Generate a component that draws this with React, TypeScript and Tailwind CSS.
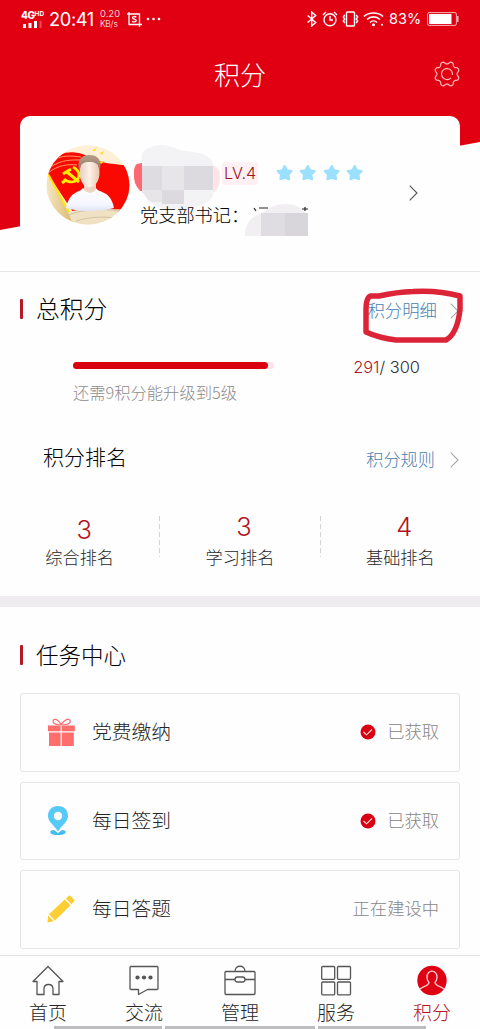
import type { ReactNode } from "react";

function StatusBar() {
  return (
    <div className="flex h-[38px] items-center justify-between pl-[21px] pr-[21px] font-['Inter',sans-serif] text-white">
      <div className="flex items-center">
        <div className="flex w-6 flex-col">
          <div className="flex h-[9px] items-start whitespace-nowrap">
            <span className="text-[10px] leading-[9px] font-extrabold tracking-[-0.4px]">4G</span>
            <span className="text-[6.5px] leading-[6px] font-bold">HD</span>
          </div>
          <svg className="ml-[2px] mt-[1px] h-[7px] w-[19px]" viewBox="0 0 19 7" fill="white">
            <path d="M0 3h3v4H0zM5.500 2h3v5h-3zM11 0h3v7h-3z" />
            <path d="M16.500 -2h2v9h-2z" opacity=".3" />
          </svg>
        </div>
        <span className="ml-[4px] w-[49px] whitespace-nowrap text-[18.300px] leading-6 tracking-[-0.4px]">20:41</span>
        <div className="mb-px ml-[2px] flex w-[24px] flex-col whitespace-nowrap font-light">
          <span className="text-[9.500px] leading-[10px]">0.20</span>
          <span className="text-[8.500px] leading-[10px] tracking-[-0.2px]">KB/s</span>
        </div>
        <svg className="ml-[3px] h-[15px] w-[15px]" viewBox="0 0 15 15" fill="none" stroke="white" strokeWidth="1.300">
          <path d="M0 2h12.500v13M2 0v12.500h13" />
          <path d="M9.300 5.200C8 4.200 5.500 4.200 5.500 5.800S9.300 7 9.300 8.600 6.200 10.200 5.200 9.200" strokeWidth="1.300" />
        </svg>
        <svg className="ml-[4px] h-[4px] w-[16px]" viewBox="0 0 16 4" fill="white">
          <circle cx="2" cy="2" r="1.300" /><circle cx="7.500" cy="2" r="1.300" /><circle cx="13" cy="2" r="1.300" />
        </svg>
      </div>
      <div className="flex items-center">
        <svg className="h-4 w-[10px]" viewBox="0 0 10 16" fill="none" stroke="white" strokeWidth="1.400">
          <path d="m.7 4.500 8 7-4 3.500V1l4 3.500-8 7" />
        </svg>
        <svg className="ml-[5px] h-4 w-4" viewBox="0 0 16 16" fill="none" stroke="white" strokeWidth="1.400">
          <circle cx="8" cy="8.700" r="6" /><path d="M8 5v4h3M1 4l3-3M15 4l-3-3" />
        </svg>
        <svg className="ml-[4px] h-4 w-[17px]" viewBox="0 0 17 16" fill="none" stroke="white" strokeWidth="1.400">
          <rect x="4.500" y="1" width="8" height="14" rx="1" /><path d="m2.800 4-1.500 2 1.500 2-1.500 2 1.500 2M14.200 4l1.500 2-1.500 2 1.500 2-1.500 2" />
        </svg>
        <svg className="ml-[4px] h-4 w-[21px]" viewBox="0 0 21 16" fill="none" stroke="white" strokeWidth="1.600">
          <path d="M1 5.500C6 .8 15 .8 20 5.500M4 8.500c3.500-3.500 9.500-3.500 13 0M7 11.500c2-2 5-2 7 0" /><circle cx="10.500" cy="13.700" r="1.500" fill="white" stroke="none" /><circle cx="19" cy="13.700" r="1" fill="white" stroke="none" />
        </svg>
        <span className="ml-[5px] w-[33px] whitespace-nowrap text-[14.500px] leading-5">83%</span>
        <svg className="ml-[5px] h-[14px] w-[32px]" viewBox="0 0 32 14">
          <rect x=".6" y=".6" width="28.800" height="12.800" rx="1.500" fill="none" stroke="white" strokeOpacity=".7" />
          <path d="M2 2h22.500v10H2z" fill="white" />
          <path d="M30.800 4v6" stroke="white" strokeOpacity=".7" strokeWidth="1.500" />
        </svg>
      </div>
    </div>
  );
}

const gearPath = Array.from({ length: 96 }, (_, i) => {
  const angle = (i / 96) * Math.PI * 2;
  const wave = Math.cos(8 * angle);
  const radius = 11.3 - 1.25 * Math.sign(wave) * Math.pow(Math.abs(wave), 0.65);
  return `${i ? "L" : "M"}${(13 + radius * Math.cos(angle)).toFixed(2)} ${(13 + radius * Math.sin(angle)).toFixed(2)}`;
}).join("") + "Z";

function Gear() {
  return (
    <svg className="h-[26px] w-[26px]" viewBox="0 0 26 26" fill="none" stroke="#ffbcbc" strokeWidth="1.200" strokeLinejoin="round">
      <path d={gearPath} />
      <path d="M17 16.800A5.500 5.500 0 1 1 18.400 14" />
    </svg>
  );
}

function Avatar() {
  return (
    <svg className="-mt-px h-[82px] w-[84px] shrink-0" viewBox="0 0 84 82">
      <defs>
        <clipPath id="round"><ellipse cx="42" cy="40" rx="41.500" ry="39.500" /></clipPath>
        <linearGradient id="skin" x1="0" y1="0" x2="1" y2="0"><stop stopColor="#e5cebf" /><stop offset=".5" stopColor="#fff1e6" /><stop offset="1" stopColor="#e5c8b2" /></linearGradient>
        <linearGradient id="shirt" x1="0" y1="0" x2="0" y2="1"><stop stopColor="#ffffff" /><stop offset=".7" stopColor="#f5f6ff" /><stop offset="1" stopColor="#dfe4f5" /></linearGradient>
        <linearGradient id="hair" x1="0" y1="0" x2="0" y2="1"><stop stopColor="#b5a08c" /><stop offset="1" stopColor="#927460" /></linearGradient>
        <linearGradient id="pole" x1="0" y1="0" x2="1" y2="0"><stop stopColor="#f5e7c5" /><stop offset="1" stopColor="#d9b568" /></linearGradient>
      </defs>
      <g clipPath="url(#round)">
        <path d="M0 0h84v82H0z" fill="#fbf0d4" />
        <path d="M2 18C14 5 31 5 43 12s28 7 41 9v46H27L2 29z" fill="#fa0902" />
        <path d="M20 0h64v19C63 19 46 8 20 6z" fill="#fdf0d7" />
        <path d="M4 17C16 9 26 11 35 12M3 23c13-9 23-8 31-8M2 28c10-8 20-9 29-8" stroke="#ff9c60" fill="none" strokeWidth="1" />
        <path d="m1 29 28 50H0z" fill="url(#pole)" />
        <path d="m2 29 27 49" stroke="#ffe800" strokeWidth="2" />
        <path d="M22 67c14-4 40-3 62-2v17H28z" fill="#efe1c1" />
        <path d="M22 70c18-7 42-7 58-2M30 76c16-5 32-5 48-1" stroke="#d2c3a8" fill="none" />
        <g fill="none" stroke="#ffed00">
          <path d="M27 22c8 4 8 14-1 15-4 0-6-1-8-3" strokeWidth="2.600" />
          <path d="m17 29 8-5M21 27l12 10M16 38l4-3" strokeWidth="3" />
        </g>
        <path d="m46 6 5-4-2 4zM54 8l4-2-2 4zM53 17l6-1-4 3z" fill="#ffe016" />
        <path d="M37 43c5 5 9 5 13 0 2 5 15 2 18 20-13 4-36 4-48 0 4-18 14-15 17-20z" fill="url(#shirt)" />
        <path d="M38 35h12v9c-2 5-10 5-12 0z" fill="#ecd3c2" />
        <ellipse cx="43.500" cy="27.500" rx="10" ry="15" fill="url(#skin)" />
        <path d="M33.500 26c-3-10 1-16 10-16s13 6 10 16l-1.500-6c-3-2.500-5-3-8.500-3s-6 .5-8.500 3z" fill="url(#hair)" />
      </g>
    </svg>
  );
}

function Chevron({ className }: { className: string }) {
  return <svg className={className} viewBox="0 0 9 16" fill="none" stroke="currentColor" strokeWidth="1.100"><path d="m.7.700 7.300 7.300-7.300 7.300" /></svg>;
}

function Header() {
  return (
    <header className="relative h-[272px] shrink-0 border-b border-[#e6e6e6]">
      <div className="absolute inset-x-0 top-0 h-[230px] bg-[#e10012] [clip-path:polygon(0_0,100%_0,100%_142px,0_230px)]" />
      <div className="relative">
        <StatusBar />
        <div className="flex h-[78px] items-center justify-between px-5 text-white">
          <span className="w-[26px]" />
          <h1 className="-mt-[7px] text-[26px] leading-8 font-light">积分</h1>
          <div className="-mt-[7px]"><Gear /></div>
        </div>
        <div className="mx-5 flex h-[150px] items-start rounded-t-[10px] bg-[#fefefe] pl-[26px] pt-[30px]">
          <Avatar />
          <div className="ml-[4px] w-[240px] shrink-0">
            <div className="flex h-[54px] items-start">
              <svg className="h-[66px] w-[87px] shrink-0 overflow-visible" viewBox="0 0 87 66">
                <defs><clipPath id="nameMask"><path d="M0 24Q1 19 3 18L8 17V8Q10 3 20 0 28-2 34 0L46 4 65 7Q79 11 79 19 86 22 86 30 86 42 80 46 78 56 65 60 48 65 35 63 18 62 10 48 1 42 0 32Z" /></clipPath></defs>
                <g clipPath="url(#nameMask)">
                  <path d="M0-2h87v70H0z" fill="#f3f3f5" />
                  <path d="M0 17h8v28H0z" fill="#ff6870" />
                  <path d="M8 20h71v24H8z" fill="#dedce0" />
                  <path d="M28 20h22v24H28zM8 44h42v12H8z" fill="#e7e5e8" />
                  <path d="M28 44h22v14H28zM50 20h29v24H50z" fill="#dcdade" />
                  <path d="M79 15h8v31h-8z" fill="#ffe5e8" />
                </g>
              </svg>
              <span className="ml-[1px] mt-[16px] h-[23px] w-[36px] whitespace-nowrap rounded-[3px] bg-[#fff1f3] pl-[2px] font-['Inter',sans-serif] text-[16.300px] leading-[23px] font-light text-[#9c1724]">LV.4</span>
              <div className="ml-[18px] mt-[18px] flex gap-[6px]">
                {[0, 1, 2, 3].map((star) => (
                  <svg key={star} className="h-[17px] w-[17.400px]" viewBox="0 0 18 17"><path d="m9 2 2.200 4.300 4.800.8-3.400 3.500.7 4.700L9 13.200l-4.300 2.100.7-4.700L2 7.100l4.800-.8z" fill="#9be0fc" stroke="#9be0fc" strokeWidth="2.500" strokeLinejoin="round" /></svg>
                ))}
              </div>
            </div>
            <div className="relative mt-[1px] flex items-start pl-[6px]">
              <span className="whitespace-nowrap text-[18.200px] leading-[27px] font-light text-black">党支部书记：</span>
              <svg className="-ml-[4px] mt-[2px] h-[34px] w-[64px]" viewBox="0 0 64 34">
                <path d="M0 33C0 20 7 12 17 11 26-1 52-3 60 10v23z" fill="#f1eff2" />
                <path d="m9 5 2 3m3-3h9m34 1h6m-3-2v4" stroke="#222" strokeWidth="1.200" fill="none" />
                <path d="M16 10h47v23H16z" fill="#d8d6da" /><path d="M16 10h24v23H16z" fill="#dfdde1" />
              </svg>
            </div>
          </div>
          <Chevron className="ml-[35px] mt-[39px] h-4 w-[9px] text-[#555]" />
        </div>
      </div>
    </header>
  );
}

function SectionTitle({ children }: { children: ReactNode }) {
  return (
    <div className="flex items-center">
      <span className="h-[20px] w-[3px] rounded-[1px] bg-[#b71825]" />
      <h2 className="-mt-[2px] ml-[13px] whitespace-nowrap font-light leading-8 text-black">{children}</h2>
    </div>
  );
}

function Summary() {
  return (
    <section className="h-[324px] shrink-0">
      <div className="flex h-[74px] items-center justify-between pl-5 pr-[21px] text-[23.800px]">
        <SectionTitle>总积分</SectionTitle>
        <div className="relative mt-[3px] flex items-center">
          <a className="-mt-px whitespace-nowrap text-[17.400px] leading-6 font-light text-[#4b81ae]">积分明细</a>
          <Chevron className="ml-[13px] h-[16px] w-[9px] text-[#aaa]" />
          <svg className="absolute -left-[5px] -top-[9px] h-[55px] w-[100px] overflow-visible" viewBox="0 0 100 55" fill="none" stroke="#dc2438" strokeWidth="5.500" strokeLinejoin="round">
            <path d="M4 42V20Q4 7 9 6L17 6Q35 2 51 1.500Q76 0 98 6V20Q95 44 84 50H34Q17 48 4 42Z" />
          </svg>
        </div>
      </div>
      <div className="flex h-[67px] items-start justify-between pl-[73px] pr-[60px]">
        <div className="pt-[16px]">
          <div className="h-[7px] w-[201px] rounded-full bg-[#ffe3e7]"><div className="h-full w-[195px] rounded-full bg-[#d9000f]" /></div>
          <p className="mt-[11px] whitespace-nowrap text-[16.300px] leading-6 font-light text-[#8c8c8c]">还需9积分能升级到5级</p>
        </div>
        <p className="mt-[9px] whitespace-nowrap font-['Inter',sans-serif] text-[16.400px] leading-6 font-light text-[#303030]"><span className="text-[#ae1725]">291</span>/ 300</p>
      </div>
      <div className="flex h-[90px] items-center justify-between pl-[43px] pr-[21px]">
        <h3 className="-mt-[4px] text-[21px] leading-8 font-light text-black">积分排名</h3>
        <div className="mt-[4px] flex items-center">
          <a className="-mt-[2px] text-[17.200px] leading-6 font-light text-[#4b81ae]">积分规则</a>
          <Chevron className="ml-[15px] h-4 w-[9px] text-[#aaa]" />
        </div>
      </div>
      <div className="flex h-[93px] items-start pt-[13px]">
        <Rank value="3" label="综合排名" first /><RankDivider />
        <Rank value="3" label="学习排名" /><RankDivider />
        <Rank value="4" label="基础排名" />
      </div>
    </section>
  );
}

function RankDivider() {
  return <div className="h-[41px] w-px bg-[repeating-linear-gradient(to_bottom,#d2d2d2_0_5px,transparent_5px_8px)]" />;
}

function Rank({ value, label, first = false }: { value: string; label: string; first?: boolean }) {
  return (
    <div className="flex h-[65px] flex-1 flex-col items-center">
      <div className={first ? "ml-[9px] h-[29px] pt-[3px]" : "ml-[8px] h-[29px]"}>
        <span className="block font-['Inter',sans-serif] text-[25.500px] leading-[22px] font-light text-[#b31420]">{value}</span>
      </div>
      <span className="text-[17.200px] leading-6 font-light text-[#272727]">{label}</span>
    </div>
  );
}

function Gift() {
  return (
    <svg className="h-[29px] w-[29px]" viewBox="0 0 29 29">
      <path d="M1 7.500h12.600v5.700H1zM14.800 7.500h13v5.700h-13zM2 14.500h11.600V28H2zM14.800 14.500h12V28h-12z" fill="#ff6d6d" />
      <path d="M14.200 6.500C10 0 6 .5 6 3.200c0 3 5 4 8.200 3.300 4 .7 9-.3 9-3.300 0-2.700-4.200-3.200-9 3.300z" fill="none" stroke="#ff6d6d" strokeWidth="1.200" />
    </svg>
  );
}

function Pin() {
  return (
    <svg className="h-[31px] w-[22px]" viewBox="0 0 22 31">
      <path d="M7 25C2 25 2.500 28.500 6 29.500c3 .8 7 .8 10 0 3.500-1 4-4.500-1-4.500l-4 3z" fill="#43bdf0" />
      <path d="M11 1C5 1 1 5 1 11c0 6 6 9 10 15.500 4-6.500 10-9.500 10-15.500C21 5 17 1 11 1z" fill="#56c9f6" />
      <circle cx="11" cy="11" r="4.200" fill="white" />
    </svg>
  );
}

function Pencil() {
  return (
    <svg className="h-[28px] w-[28px]" viewBox="0 0 28 28" fill="#fbce32">
      <path d="m18.800 3.500 2.700-2.500q1-1 2 0L27 4.500q1 1 0 2l-2.500 2.700zM2 19.300 17.700 4.500 23.500 10.200 8 25.500zM1.200 20.500l5.600 5.800L.5 27.500z" />
    </svg>
  );
}

function Task({ icon, title, status, done = true }: { icon: ReactNode; title: string; status: string; done?: boolean }) {
  return (
    <article className="flex h-[78.500px] shrink-0 items-center rounded-[3px] border border-[#e6e6e9] pl-[26px] pr-[20px]">
      <div className="flex w-[45px] items-center">{icon}</div>
      <h3 className="-mt-[2px] text-[19.800px] leading-8 font-light text-[#252525]">{title}</h3>
      <div className="ml-auto flex items-center">
        {done && <svg className="h-[16px] w-[16px]" viewBox="0 0 16 16"><circle cx="8" cy="8" r="7.500" fill="#d90014" /><path d="m3.500 8 3 2.800L12 5.500" fill="none" stroke="#ffdfe1" strokeWidth="1.100" /></svg>}
        <span className="-mt-[2px] ml-[11px] text-[17.300px] leading-6 font-light text-[#868686]">{status}</span>
      </div>
    </article>
  );
}

function TaskCenter() {
  return (
    <section className="h-[348px] shrink-0">
      <div className="flex h-[86px] items-center pl-5 pt-[10px] text-[22.500px]"><SectionTitle>任务中心</SectionTitle></div>
      <div className="flex flex-col gap-[10px] px-5">
        <Task icon={<Gift />} title="党费缴纳" status="已获取" />
        <Task icon={<Pin />} title="每日签到" status="已获取" />
        <Task icon={<Pencil />} title="每日答题" status="正在建设中" done={false} />
      </div>
    </section>
  );
}

function Tab({ label, icon, active = false }: { label: string; icon: ReactNode; active?: boolean }) {
  return (
    <button className={active ? "flex w-24 flex-col items-center pt-[9px] text-[#b51320]" : "flex w-24 flex-col items-center pt-[9px] text-[#252525]"}>
      <svg className="h-8 w-8" viewBox="0 0 32 32" fill="none" stroke="#555" strokeWidth="1.300" strokeLinejoin="round">{icon}</svg>
      <span className="mt-px text-[19px] leading-[27px] font-light">{label}</span>
    </button>
  );
}

function Navigation() {
  return (
    <nav className="relative flex h-[74px] shrink-0 border-t border-[#e4e4e4]">
      <Tab label="首页" icon={<path d="M1 16.500 16 1.500l15 15h-4V29.500h-6v-5.500c0-6-9-6-9 0v5.500H5V16.500z" />} />
      <Tab label="交流" icon={<><path d="M3 1.500h26q1 0 1 1v21q0 1-1 1H19.500l-9 5v-5H3q-1 0-1-1v-21q0-1 1-1z" /><g fill="#555" stroke="none"><circle cx="9.500" cy="12.500" r="2.100" /><circle cx="16" cy="12.500" r="2.100" /><circle cx="22.500" cy="12.500" r="2.100" /></g></>} />
      <Tab label="管理" icon={<><path d="M2 6.500h28q1 0 1 1v21q0 1-1 1H2q-1 0-1-1v-21q0-1 1-1zM11 6.500c0-7 10-7 10 0M1 14.500h10m10 0h10" /><rect x="11" y="12" width="10" height="5" rx="2.500" /></>} />
      <Tab label="服务" icon={<><rect x="1.700" y="1.500" width="13" height="12.800" rx="1" /><rect x="17.500" y="1.500" width="13" height="12.800" rx="1" /><rect x="1.700" y="17" width="13" height="12.800" rx="1" /><rect x="17.500" y="17" width="13" height="12.800" rx="1" /></>} />
      <Tab label="积分" active icon={<><circle cx="16" cy="15.500" r="14.700" fill="#df0013" stroke="none" /><path d="M4 24c3-3 9-3 9-6.500-2-2-1.500-3-2-5-.3-8.500 10.300-8.500 10 0-.5 2 0 3-2 5 0 3.500 6 3.500 9 6.500" stroke="#ffd5d8" /></>} />
      <div className="absolute inset-x-0 bottom-0 flex h-[3px] justify-center gap-[3px]">
        <span className="w-[108px] bg-[#bdbdc0]" /><span className="w-[150px] bg-[#bdbdc0]" /><span className="w-[108px] bg-[#bdbdc0]" />
      </div>
    </nav>
  );
}

export default function App() {
  return (
    <main className="flex h-[1029px] w-[480px] flex-col overflow-hidden bg-[#fefefe] font-['Noto_Sans_CJK_SC',sans-serif]">
      <Header />
      <Summary />
      <div className="h-[11px] shrink-0 bg-[#eeecef]" />
      <TaskCenter />
      <Navigation />
    </main>
  );
}
